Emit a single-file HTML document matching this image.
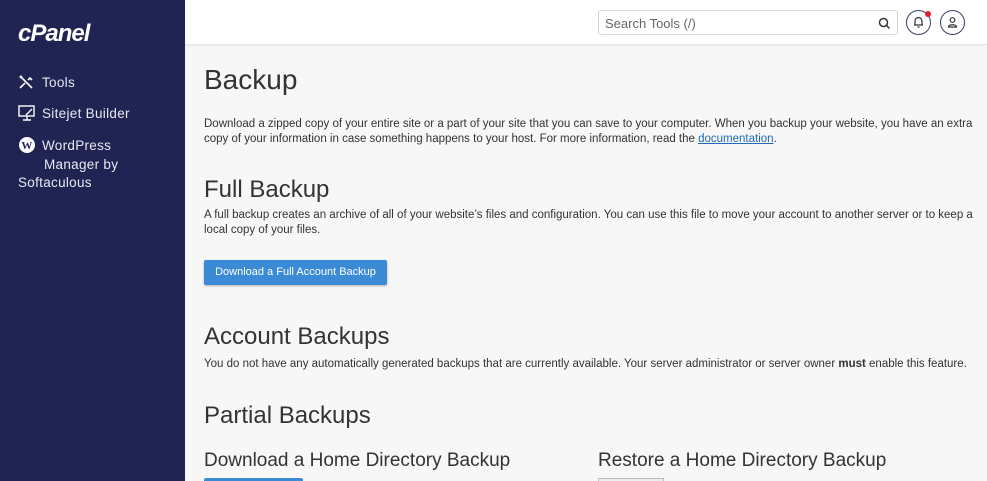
<!DOCTYPE html>
<html style="width:987px;height:481px;overflow:hidden"><head><style>
*{margin:0;padding:0;box-sizing:border-box}
body{width:987px;height:481px;overflow:hidden;background:#f7f7f7;font-family:"Liberation Sans",sans-serif;color:#333;position:relative}
.side{position:absolute;left:0;top:0;width:185px;height:481px;background:#1f2453;color:#fff}
.logo{position:absolute;left:18px;top:20px;font-size:24px;font-weight:bold;font-style:italic;letter-spacing:-1px}
.nav{position:absolute;left:18px;font-size:13.5px;color:#e8e9f0;letter-spacing:.3px}
.top{position:absolute;left:185px;top:0;right:0;height:45px;background:#fff;border-bottom:1px solid #e6e6e6;box-shadow:0 1px 3px rgba(0,0,0,.05)}
.search{position:absolute;left:598px;top:10px;width:300px;height:25px;border:1px solid #d5d5d5;border-radius:3px;background:#fff;font-size:13px;color:#666;padding:5px 6px}
.circ{position:absolute;top:10px;width:25px;height:25px;border:1px solid #3a3f6a;border-radius:50%}
.m{position:absolute;left:204px}
h1{font-weight:normal;font-size:28px;color:#333}
h2{font-weight:normal;font-size:24px;color:#333}
h3{font-weight:normal;font-size:19px;color:#333}
p{font-size:11.5px;line-height:15px;color:#333}
.btn{position:absolute;left:204px;top:260px;width:183px;height:25px;background:#3a8ad6;border-radius:2px;color:#fff;font-size:11px;text-align:center;line-height:25px;box-shadow:0 1px 2px rgba(0,0,0,.3)}
a{color:#1f6bb5}
</style></head><body>
<div class="side">
<div class="logo">cPanel</div>
<div class="nav" style="top:74px"><svg width="16" height="16" viewBox="0 0 16 16" style="vertical-align:-3px;margin-right:8px"><path d="M2 2l12 12M2 14l5-5M10 6l2-2 2 2-2-2M4 2L2 4" stroke="#fff" stroke-width="1.6" fill="none"/></svg>Tools</div>
<div class="nav" style="top:105px"><svg width="18" height="16" viewBox="0 0 18 16" style="vertical-align:-3px;margin-right:6px"><rect x="1" y="1" width="15" height="10" stroke="#fff" fill="none" stroke-width="1.4"/><path d="M5 15h8M9 11v4M8 10l6-6" stroke="#fff" stroke-width="1.4"/></svg>Sitejet Builder</div>
<div class="nav" style="top:136px;line-height:18.5px"><svg width="18" height="18" viewBox="0 0 18 18" style="vertical-align:-4px;margin-right:6px"><circle cx="9" cy="9" r="8" fill="#fff"/><text x="9" y="13" font-size="11" font-weight="bold" text-anchor="middle" fill="#1f2453" font-family="Liberation Serif">W</text></svg>WordPress<br><span style="padding-left:26px">Manager by</span><br>Softaculous</div>
</div>
<div class="top"></div>
<div class="search">Search Tools (/)<svg width="13" height="13" viewBox="0 0 13 13" style="position:absolute;right:6px;top:6px"><circle cx="5.5" cy="5.5" r="4" stroke="#333" stroke-width="1.5" fill="none"/><path d="M8.5 8.5l3 3" stroke="#333" stroke-width="1.5"/></svg></div>
<div class="circ" style="left:906px"><svg width="23" height="23" viewBox="0 0 23 23"><path d="M8 14V10a3.5 3.5 0 017 0v4zM7 14h9M10.5 16h2" stroke="#333" stroke-width="1.2" fill="none"/></svg></div>
<div style="position:absolute;left:925px;top:11px;width:6px;height:6px;border-radius:50%;background:#e0202a"></div>
<div class="circ" style="left:940px"><svg width="23" height="23" viewBox="0 0 23 23"><circle cx="11.5" cy="9" r="2.3" stroke="#333" stroke-width="1.2" fill="none"/><path d="M7.5 16c0-3 8-3 8 0z" stroke="#333" stroke-width="1.2" fill="none"/></svg></div>
<h1 class="m" style="top:64px">Backup</h1>
<p class="m" style="top:117px;width:770px">Download a zipped copy of your entire site or a part of your site that you can save to your computer. When you backup your website, you have an extra copy of your information in case something happens to your host. For more information, read the <a href="#">documentation</a>.</p>
<h2 class="m" style="top:176px">Full Backup</h2>
<p class="m" style="top:208px;width:770px">A full backup creates an archive of all of your website’s files and configuration. You can use this file to move your account to another server or to keep a local copy of your files.</p>
<div class="btn">Download a Full Account Backup</div>
<h2 class="m" style="top:323px">Account Backups</h2>
<p class="m" style="top:357px;width:780px">You do not have any automatically generated backups that are currently available. Your server administrator or server owner <b>must</b> enable this feature.</p>
<h2 class="m" style="top:402px">Partial Backups</h2>
<h3 class="m" style="top:450px">Download a Home Directory Backup</h3>
<h3 style="position:absolute;left:598px;top:450px">Restore a Home Directory Backup</h3>
<div style="position:absolute;left:204px;top:478px;width:99px;height:3px;background:#3a8ad6;border-radius:2px 2px 0 0"></div>
<div style="position:absolute;left:598px;top:478px;width:66px;height:3px;background:#eee;border:1px solid #bbb;border-bottom:0"></div>
</body></html>
